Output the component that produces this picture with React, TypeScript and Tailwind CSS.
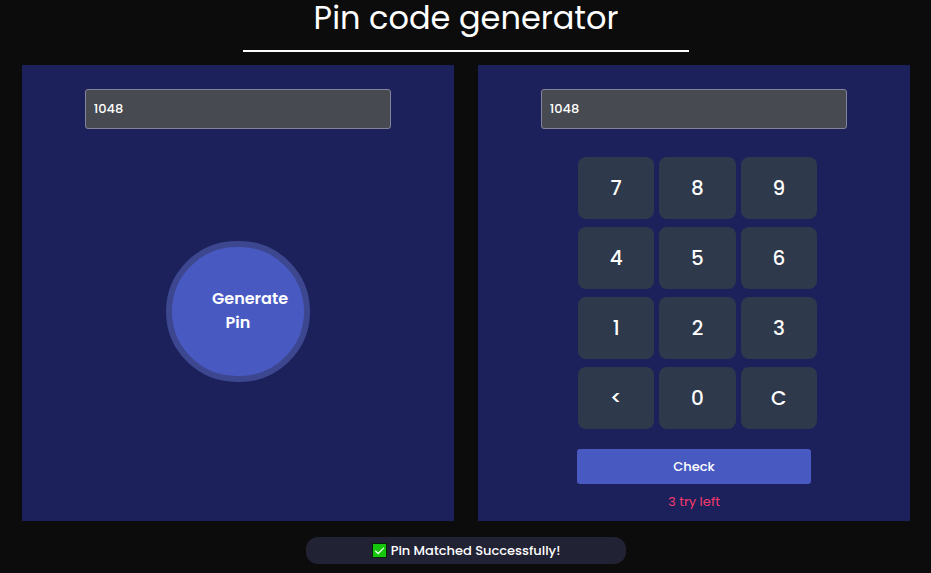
import { useState } from "react";

const KEYS = ["7", "8", "9", "4", "5", "6", "1", "2", "3", "<", "0", "C"];

function PinInput({ label, value, onChange }: { label: string; value: string; onChange: (v: string) => void }) {
  return (
    <input
      type="text"
      aria-label={label}
      value={value}
      onChange={(e) => onChange(e.target.value)}
      className="h-10 w-[71%] rounded-[3px] border border-[#85839c] bg-[#474a51] px-2 text-[13px] font-medium text-white outline-none"
    />
  );
}

export default function App() {
  const [generated, setGenerated] = useState("1048");
  const [entered, setEntered] = useState("1048");
  const [tries, setTries] = useState(3);
  const [matched, setMatched] = useState(true);

  const press = (key: string) => {
    if (key === "C") setEntered("");
    else if (key === "<") setEntered(entered.slice(0, -1));
    else setEntered(entered + key);
  };

  const check = () => {
    const ok = entered === generated;
    setMatched(ok);
    if (!ok) setTries(Math.max(0, tries - 1));
  };

  return (
    <div className="flex min-h-screen flex-col items-center bg-[#0c0c0c] pr-[21px] pb-2 pl-[22px] font-['Poppins','Inter',sans-serif] text-white">
      <h1 className="flex h-[52px] w-[48vw] justify-center border-b-2 border-white text-[32px] leading-9 whitespace-nowrap">
        Pin code generator
      </h1>

      <main className="mt-[13px] grid w-full grid-cols-2 gap-6">
        <section className="flex flex-col items-center bg-[#1c215b] pt-6 pb-[9px]">
          <PinInput label="Generated pin" value={generated} onChange={setGenerated} />
          <button
            type="button"
            onClick={() => setGenerated(String(Math.floor(1000 + Math.random() * 9000)))}
            className="mt-28 h-[141px] w-36 rounded-full border-6 border-[#3c478f] bg-[#485ac2] px-10 pb-0.5 text-center text-base font-semibold"
          >
            Generate Pin
          </button>
        </section>

        <section className="flex flex-col items-center bg-[#1c215b] pt-6 pb-[9px]">
          <PinInput label="Entered pin" value={entered} onChange={setEntered} />
          <div className="mt-7 w-[234px]">
            <div className="grid w-60 grid-cols-3 gap-x-[5px] gap-y-2 pl-px">
              {KEYS.map((key) => (
                <button
                  key={key}
                  type="button"
                  onClick={() => press(key)}
                  className="h-[62px] rounded-lg bg-[#2e394b] text-xl font-medium"
                >
                  {key}
                </button>
              ))}
            </div>
            <button
              type="button"
              onClick={check}
              className="mt-5 h-[35px] w-full rounded-[3px] bg-[#485ac2] text-[13px] font-medium"
            >
              Check
            </button>
            <p className="mt-2 text-center text-[13px] leading-5 text-[#f53a6c]">{tries} try left</p>
          </div>
        </section>
      </main>

      <p className="mt-4 flex h-[27px] w-[36%] items-center justify-center gap-1 rounded-xl bg-[#222235] text-[13px] font-medium">
        {matched && (
          <svg viewBox="0 0 15 15" className="size-[15px]" aria-hidden="true">
            <rect x="0.5" y="0.5" width="14" height="14" fill="#16c60c" stroke="#07220a" />
            <path d="M3.2 7.8l3 2.7 5.6-5.6" fill="none" stroke="#e9ffe8" strokeWidth="1.3" />
          </svg>
        )}
        {matched ? "Pin Matched Successfully!" : "Pin Not Match, Please try again"}
      </p>
    </div>
  );
}
